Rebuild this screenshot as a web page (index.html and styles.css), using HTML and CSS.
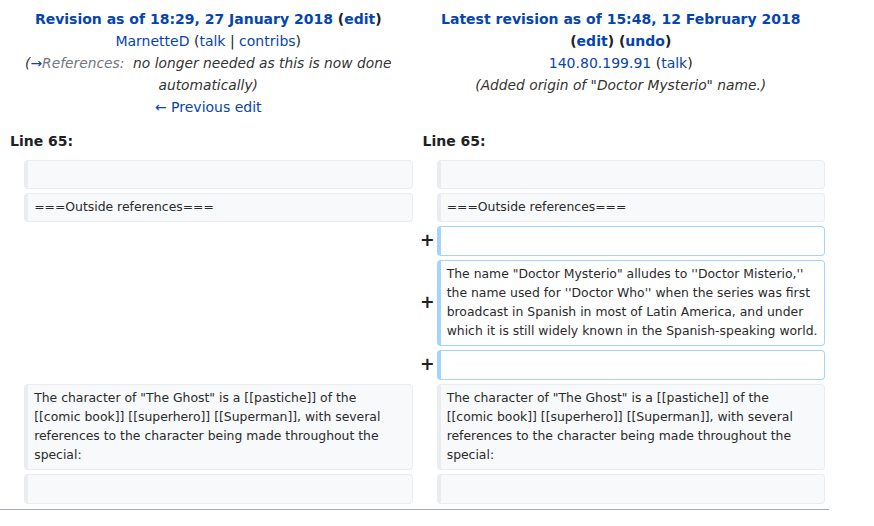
FILE: index.html
```html
<!DOCTYPE html>
<html>
<head>
<meta charset="utf-8">
<link rel="stylesheet" href="styles.css">
</head>
<body>
<div class="page">
  <div class="diff">
    <div class="title">
      <div class="t-head"><a href="#">Revision as of 18:29, 27 January 2018</a> <span class="paren">(<a href="#">edit</a>)</span></div>
      <div><a href="#">MarnetteD</a> (<a href="#">talk</a> | <a href="#">contribs</a>)</div>
      <div class="summary">(<a href="#" class="arrow">→</a><span class="autocomment">References:</span>&nbsp; no longer needed as this is now done automatically)</div>
      <div><a href="#">← Previous edit</a></div>
    </div>
    <div class="title">
      <div class="t-head"><a href="#">Latest revision as of 15:48, 12 February 2018</a> <span class="paren">(<a href="#">edit</a>)</span> <span class="paren">(<a href="#">undo</a>)</span></div>
      <div><a href="#">140.80.199.91</a> (<a href="#">talk</a>)</div>
      <div class="summary">(Added origin of "Doctor Mysterio" name.)</div>
    </div>

    <div class="lineno">Line 65:</div>
    <div class="lineno">Line 65:</div>

    <div class="marker"></div><div class="line ctx"></div>
    <div class="marker"></div><div class="line ctx"></div>

    <div class="marker"></div><div class="line ctx">===Outside references===</div>
    <div class="marker"></div><div class="line ctx">===Outside references===</div>

    <div class="marker"></div><div class="empty"></div>
    <div class="marker"><span class="plus">+</span></div><div class="line added"></div>

    <div class="marker"></div><div class="empty"></div>
    <div class="marker"><span class="plus">+</span></div><div class="line added">The name "Doctor Mysterio" alludes to ''Doctor Misterio,''<br>the name used for ''Doctor Who'' when the series was first<br>broadcast in Spanish in most of Latin America, and under<br>which it is still widely known in the Spanish-speaking world.</div>

    <div class="marker"></div><div class="empty"></div>
    <div class="marker"><span class="plus">+</span></div><div class="line added"></div>

    <div class="marker"></div><div class="line ctx">The character of "The Ghost" is a [[pastiche]] of the<br>[[comic book]] [[superhero]] [[Superman]], with several<br>references to the character being made throughout the<br>special:</div>
    <div class="marker"></div><div class="line ctx">The character of "The Ghost" is a [[pastiche]] of the<br>[[comic book]] [[superhero]] [[Superman]], with several<br>references to the character being made throughout the<br>special:</div>

    <div class="marker"></div><div class="line ctx"></div>
    <div class="marker"></div><div class="line ctx"></div>
  </div>
  <div class="diff-hr"></div>
</div>
</body>
</html>
```

FILE: styles.css
```css
html, body {
  margin: 0;
  padding: 0;
  background: #ffffff;
}

body {
  font-family: "DejaVu Sans", sans-serif;
  color: #202122;
  font-size: 14px;
}

a {
  color: #0645ad;
  text-decoration: none;
}

.page {
  width: 829px;
}

.diff {
  display: grid;
  grid-template-columns: minmax(0, 2fr) minmax(0, 48fr) minmax(0, 2fr) minmax(0, 48fr);
  gap: 4px;
  padding: 4px;
}

.title {
  grid-column: span 2;
  text-align: center;
  line-height: 22px;
  padding: 4px 7px;
}

.t-head {
  font-weight: bold;
}

.paren {
  color: #202122;
}

.summary {
  font-style: italic;
  color: #333333;
  font-size: 13.8px;
}

.autocomment {
  color: #72777d;
}

.arrow {
  color: #0645ad;
}

.lineno {
  grid-column: span 2;
  font-weight: bold;
  line-height: 22px;
  padding: 4px 6px;
}

.marker {
  display: flex;
  align-items: center;
  justify-content: flex-end;
  font-size: 17.5px;
  line-height: 1.2;
  color: #202122;
}

.plus {
  font-weight: bold;
  margin-right: -2px;
}

.line {
  font-size: 12.4px;
  line-height: 19.2px;
  padding: 3px 5px 5px 6px;
  border-style: solid;
  border-width: 1px 1px 1px 4px;
  border-radius: 4px;
  white-space: nowrap;
  min-height: 19.2px;
  color: #2a2a2a;
}

.ctx {
  background: #f8f9fa;
  border-color: #eaecf0;
}

.added {
  background: #ffffff;
  border-color: #a3d3ff;
}

.diff-hr {
  border-top: 1px solid #a2a9b1;
  margin-top: 1px;
}
```
